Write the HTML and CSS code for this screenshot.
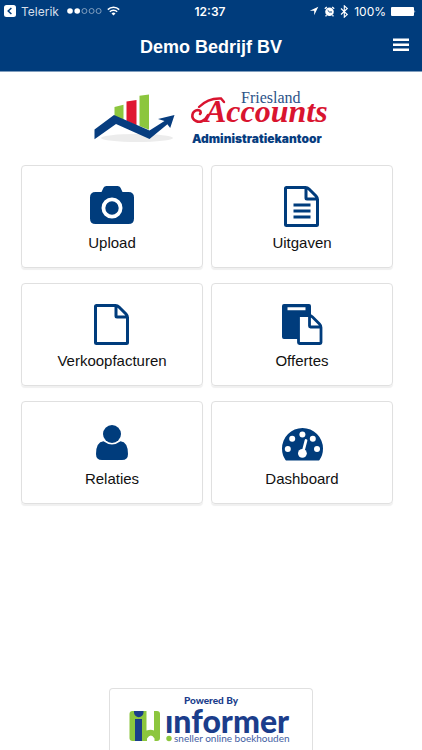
FILE: index.html
```html
<!DOCTYPE html>
<html lang="nl">
<head>
<meta charset="utf-8">
<meta name="viewport" content="width=device-width, initial-scale=1">
<title>Demo Bedrijf BV</title>
<link rel="stylesheet" href="styles.css">
</head>
<body>
<header class="top">
  <div class="status">
    <div class="status-left">
      <svg width="12" height="12" viewBox="0 0 12 12" aria-hidden="true"><rect width="12" height="12" rx="2.5" fill="#fff"/><path d="M7.4 3 4.2 6l3.2 3" fill="none" stroke="#003c7c" stroke-width="1.5"/></svg>
      <span>Telerik</span>
      <svg class="signal" width="35" height="8" viewBox="0 0 35 8" aria-hidden="true"><g fill="#fff"><circle cx="3" cy="4" r="2.8"/><circle cx="10.2" cy="4" r="2.8"/></g><g fill="none" stroke="#b3c4d8" stroke-width=".7"><circle cx="17.4" cy="4" r="2.5"/><circle cx="24.6" cy="4" r="2.5"/><circle cx="31.6" cy="4" r="2.5"/></g></svg>
      <svg width="13" height="10" viewBox="0 0 13 10" aria-hidden="true"><path d="M.8 3.6a8.2 8.2 0 0 1 11.4 0M2.8 5.8a5.3 5.3 0 0 1 7.4 0" fill="none" stroke="#fff" stroke-width="1.5"/><path d="m6.500 9.600-2-2.200a2.900 2.900 0 0 1 4 0z" fill="#fff"/></svg>
    </div>
    <time class="clock">12:37</time>
    <div class="status-right">
      <svg width="10" height="10" viewBox="0 0 10 10" aria-hidden="true"><path d="M9.300.8.800 4.800h4.400v4.400z" fill="#fff"/></svg>
      <svg width="11" height="11" viewBox="0 0 11 11" aria-hidden="true"><circle cx="5.500" cy="5.800" r="4.300" fill="#fff"/><path d="M.8 2.700 2.800.9M10.200 2.700 8.200.9M2.500 9.200l-.9 1.200M8.500 9.200l.9 1.200" stroke="#fff" stroke-width="1.300"/><path d="M5.500 6H8M5.500 6 3.700 4.300" stroke="#003c7c"/></svg>
      <svg width="9" height="13" viewBox="0 0 9 13" aria-hidden="true"><path d="m1 3.500 6.300 6-3 2.700V.8l3 2.700-6.300 6" fill="none" stroke="#fff" stroke-width="1.100"/></svg>
      <span>100%</span>
      <svg width="25" height="9" viewBox="0 0 25 9" aria-hidden="true"><rect width="23" height="9" rx="1" fill="#fff"/><path d="M23.500 3q1.500 1.500 0 3z" fill="#fff"/></svg>
    </div>
  </div>
  <div class="bar">
    <h1>Demo Bedrijf BV</h1>
    <button class="menu" type="button" aria-label="Menu">
      <svg width="16" height="14" viewBox="0 0 16 14"><path d="M0 .5h16v2.600H0zM0 5.500h16v2.600H0zM0 10.500h16v2.600H0z" fill="#fff"/></svg>
    </button>
  </div>
</header>

<main>
  <svg class="brand" width="246" height="58" viewBox="84 90 246 58" role="img" aria-label="Friesland Accounts Administratiekantoor">
    <ellipse cx="137" cy="138" rx="36" ry="4" fill="#ececec"/>
    <path d="m114.500 107 9-2.200v15.200l-9-3.600z" fill="#8cc63e"/>
    <path d="m126.500 101.500 10-1.500v25.500l-10-4.500z" fill="#df1830"/>
    <path d="m139.500 95.800 9.500-1.300v35.200l-9.500-3.800z" fill="#8cc63e"/>
    <path d="M94.500 129.500 114 115l35.500 15.500 15-9.500-6.500-2 16.500-4-4.300 13-2.800-3.700-17.900 14.700-33.500-15-21.500 15.200z" fill="#073d7f"/>
    <text class="brand-friesland" x="241" y="103">Friesland</text>
    <path d="M208 115c-3 6-8 8-12 6-6-3-4-10 1.500-11 3 0 4 2 2.500 4" fill="none" stroke="#d9142f" stroke-width="2.600" stroke-linecap="round"/>
    <path d="M199 107c5-5 12-9 22-8.500l3 3.500" fill="none" stroke="#d9142f" stroke-width="2.400" stroke-linecap="round"/>
    <text class="brand-accounts" x="205" y="122">Accounts</text>
    <text class="brand-admin" x="192" y="143">Administratiekantoor</text>
  </svg>

  <nav class="tiles">
    <a class="tile" href="#upload">
      <svg viewBox="0 0 48 48" aria-hidden="true"><path fill="currentColor" fill-rule="evenodd" d="M7.500 10h6l2-4.200Q16.300 4 18.500 4h11q2.200 0 3 1.800l2 4.200h6Q46 10 46 15.500v21q0 5.500-5.500 5.500h-33Q2 42 2 36.500v-21Q2 10 7.500 10zM24 15.500a10.500 10.500 0 1 0 0 21 10.500 10.500 0 0 0 0-21zm0 3.800a6.700 6.700 0 1 1 0 13.400 6.700 6.700 0 0 1 0-13.400z"/></svg>
      <span>Upload</span>
    </a>
    <a class="tile" href="#uitgaven">
      <svg viewBox="0 0 48 48" aria-hidden="true"><path class="line" d="M8.500 5.500h19q2 0 3.500 1.500l7 7q1.500 1.500 1.500 3.500v25q0 1-1 1h-30q-1 0-1-1v-36q0-1 1-1zM28 6v10q0 1 1 1h10M15.500 23h17M15.500 29h17M15.500 35h17"/></svg>
      <span>Uitgaven</span>
    </a>
    <a class="tile" href="#verkoopfacturen">
      <svg viewBox="0 0 48 48" aria-hidden="true"><path class="line" d="M8.500 5.500h19q2 0 3.500 1.500l7 7q1.500 1.500 1.500 3.500v25q0 1-1 1h-30q-1 0-1-1v-36q0-1 1-1zM28 6v10q0 1 1 1h10"/></svg>
      <span>Verkoopfacturen</span>
    </a>
    <a class="tile" href="#offertes">
      <svg viewBox="0 0 48 48" aria-hidden="true"><path fill="currentColor" fill-rule="evenodd" d="M6 4h25q2 0 2 2v9H21v24H6q-2 0-2-2V6q0-2 2-2zm3.500 3.200v3h18v-3z"/><path d="M21.500 15.500H31q2 0 3.500 1.500l7 7q1.500 1.500 1.500 3.500v15q0 1-1 1H21.500q-1 0-1-1v-26q0-1 1-1zM31.500 16v10q0 1 1 1h10" fill="#fff" stroke="currentColor" stroke-width="2.800"/></svg>
      <span>Offertes</span>
    </a>
    <a class="tile" href="#relaties">
      <svg viewBox="0 0 48 48" aria-hidden="true"><g fill="currentColor"><circle cx="24" cy="16" r="9"/><path d="M15.500 23.200q8.500 6.400 17 0 7.500.8 7.500 12.800 0 6-6 6H14q-6 0-6-6 0-12 7.500-12.800z"/></g></svg>
      <span>Relaties</span>
    </a>
    <a class="tile" href="#dashboard">
      <svg viewBox="0 0 48 48" aria-hidden="true"><path d="M7.500 42Q4 37 4 30.500a20.500 20.500 0 0 1 41 0Q45 37 41.500 42q-.5.600-1.200.600H8.700q-.7 0-1.200-.600z" fill="currentColor"/><g fill="#fff"><circle cx="9.800" cy="31" r="3"/><circle cx="14.200" cy="20.800" r="3"/><circle cx="24.400" cy="16.500" r="3"/><circle cx="34.800" cy="20.800" r="3"/><circle cx="39" cy="31" r="3"/><circle cx="24.400" cy="35.300" r="4.400"/></g><path d="m25 34 3-11.500" stroke="#fff" stroke-width="2.800" stroke-linecap="round"/></svg>
      <span>Dashboard</span>
    </a>
  </nav>
</main>

<footer class="powered">
  <svg width="166" height="54" viewBox="128 694 166 54" role="img" aria-label="Powered By informer, sneller online boekhouden">
    <text class="powered-by" x="184" y="704">Powered By</text>
    <rect x="129.500" y="711" width="30.500" height="30" rx="3" fill="#8cc63e"/>
    <path d="M134 711h9.500v1.500a4.700 4.700 0 0 1-9.500 0zM135 719h7v22h-7z" fill="#1b3d8b"/>
    <path d="M146.500 710.500h7.500v20q-3-1.500-7.500 0zM147 741.500v-3q4-6 7.500 0v3z" fill="#fff"/>
    <text class="informer" x="165" y="733">ınformer</text>
    <circle cx="169" cy="738.500" r="2.700" fill="#8cc63e"/>
    <text class="tagline" x="174" y="742">sneller online boekhouden</text>
  </svg>
</footer>
</body>
</html>
```
FILE: styles.css
```css
* {
  box-sizing: border-box;
}

body {
  margin: 0;
  min-height: 100vh;
  display: flex;
  flex-direction: column;
  background: #fff;
  color: #111;
  font-family: "Liberation Sans", Arial, sans-serif;
  font-size: 15px;
}

svg {
  display: block;
  flex: none;
}

.top {
  background: #003c7c;
  color: #fff;
  border-bottom: 1px solid #7f9dbd;
}

.status {
  display: grid;
  grid-template-columns: 1fr auto 1fr;
  align-items: center;
  height: 22px;
  padding: 0 6px 0 4px;
  font-family: Inter, sans-serif;
  font-size: 12px;
}

.status-left,
.status-right {
  display: flex;
  align-items: center;
  gap: 5px;
}

.status-left {
  color: #d5dfea;
}

.signal {
  margin-left: 3px;
}

.status-right {
  justify-content: flex-end;
}

.clock {
  font-weight: 600;
}

.bar {
  display: grid;
  grid-template-columns: 1fr auto 1fr;
  align-items: center;
  height: 49px;
  padding: 0 13px;
}

h1 {
  grid-column: 2;
  margin: 0;
  font-size: 18px;
  line-height: 26px;
}

.menu {
  justify-self: end;
  padding: 0 0 4px;
  border: 0;
  background: none;
  cursor: pointer;
}

main {
  flex: 1;
  padding: 18px 29px 16px 21px;
}

.brand {
  margin: 0 auto 17px;
}

.brand-friesland {
  font: 16px "Liberation Serif", serif;
  fill: #2b5288;
}

.brand-accounts {
  font: italic bold 32px "Liberation Serif", serif;
  fill: #d9142f;
}

.brand-admin {
  font: 900 12px Inter, sans-serif;
  fill: #073d7f;
}

.tiles {
  display: grid;
  grid-template-columns: 1fr 1fr;
  gap: 15px 8px;
}

.tile {
  display: flex;
  flex-direction: column;
  align-items: center;
  gap: 3px;
  height: 103px;
  padding-top: 16px;
  border: 1px solid #e0e0e0;
  border-radius: 4px;
  box-shadow: 0 2px 1px #f0f0f0;
  color: #111;
  line-height: 20px;
  text-decoration: none;
}

.tile svg {
  width: 48px;
  height: 48px;
  color: #003c7c;
}

.line {
  fill: none;
  stroke: currentColor;
  stroke-width: 3;
}

.powered {
  align-self: center;
  display: flex;
  justify-content: center;
  width: 204px;
  height: 62px;
  padding-top: 5px;
  border: 1px solid #e0e0e0;
  border-bottom: 0;
  border-radius: 4px 4px 0 0;
}

.powered-by {
  font: 900 10px Lato, sans-serif;
  fill: #1b3d8b;
}

.informer {
  font: 900 32px Lato, sans-serif;
  fill: #1b3d8b;
}

.tagline {
  font: 10px Lato, sans-serif;
  fill: #3f5ea3;
}
```
